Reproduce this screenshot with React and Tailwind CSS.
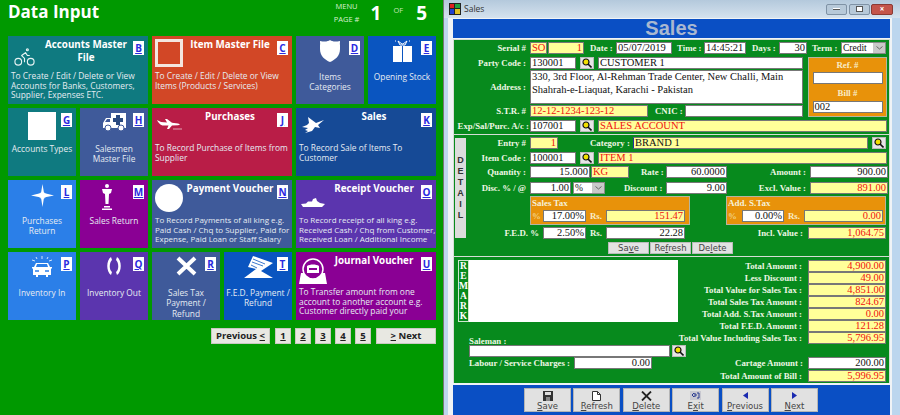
import React from 'react';
import { Bike } from 'lucide-react';

const SERIF = "[font-family:'Liberation_Serif',serif]";

const PlainSquare = () => <div className="w-[28px] h-[28px] border-[3px] border-[#f4e6df]" />;
const FilledSquare = () => <div className="w-[28px] h-[28px] bg-white" />;
const FilledCircle = () => <div className="w-[28px] h-[28px] rounded-full bg-white" />;

const Ambulance = () => (
  <svg width="25" height="20" viewBox="0 0 25 20">
    <path d="M9 1h15v15H1v-5l3-5h5z" fill="#fff" />
    <path d="M3 10l2-3h3v3z" fill="#3f5a9a" />
    <path d="M14 3h4v3h3v4h-3v3h-4v-3h-3V6h3z" fill="#2a4a80" />
    <circle cx="6" cy="16" r="3" fill="#fff" stroke="#3f5a9a" />
    <circle cx="19" cy="16" r="3" fill="#fff" stroke="#3f5a9a" />
  </svg>
);
const ShieldIcon = () => (
  <svg width="20" height="22" viewBox="0 0 20 22">
    <path d="M10 0c2 1.500 5 2 10 1 0 1 0 2-.2 3 .5 1.500.2 3 .2 5 0 7-5 11-10 13C5 20 0 16 0 9c0-2-.3-3.500.2-5C0 3 0 2 0 1c5 1 8 .5 10-1z" fill="#fff" />
  </svg>
);
const GiftBook = () => (
  <svg width="21" height="22" viewBox="0 0 21 22">
    <path d="M6 1l4 3 1 0 4-3-2 4H8zM3 1h1M17 1h1" stroke="#fff" strokeWidth="1" fill="none" />
    <path d="M1 6h9v16H1zM11 6h9v16h-9z" fill="#fff" />
  </svg>
);
const Plane = () => (
  <svg width="25" height="11" viewBox="0 0 25 11">
    <path d="M0 1l4 2 6 .5L8 0h2l5 3.800 6 .7c2 .5 3 1.200 0 1.800l-6 .3-3 3.400H10l1.500-3.400-6 0C3 6 1 3 0 1z" fill="#fff" />
    <path d="M16 10h9" stroke="#fff" strokeWidth=".6" />
  </svg>
);
const Helicopter = () => (
  <svg width="23" height="18" viewBox="0 0 23 18">
    <path d="M6 0l8 6 8-3-6 5 2 3-5-1-3 4-7 2 3-2-3-1 3-2-6-1 5-2 2-2z" fill="#fff" />
  </svg>
);
const Star = () => (
  <svg width="23" height="23" viewBox="0 0 23 23">
    <path d="M11.500 0l1.500 9 10 2.500-10 2L11.500 23 10 13.500 0 11.500 10 9z" fill="#fff" />
    <circle cx="11.500" cy="11.500" r="3" fill="none" stroke="#fff" />
  </svg>
);
const Statue = () => (
  <svg width="10" height="26" viewBox="0 0 10 26">
    <circle cx="5" cy="2" r="2" fill="#fff" />
    <path d="M0 5h10l-1 4-2 1-.5 10h-3L3 10 1 9z" fill="#fff" />
    <path d="M2 22h6v1.500H2zM0 24.500h10V26H0z" fill="#fff" />
  </svg>
);
const Ship = () => (
  <svg width="24" height="9" viewBox="0 0 24 9">
    <path d="M0 6l5-.500 2-2h4L12 1l3-1 1 3 3 2 5 1-3 3H2z" fill="#fff" />
  </svg>
);
const Car = () => (
  <svg width="20" height="21" viewBox="0 0 20 21">
    <path d="M10 0v3M4 1l1 2M16 1l-1 2M0 4l3 1M20 4l-3 1" stroke="#fff" strokeWidth=".8" />
    <path d="M4 7h12l2 4h2v1l-1 1v6h-3v2h-2v-2H6v2H4v-2H1v-6l-1-1v-1h2z" fill="#fff" />
    <path d="M5 8h10l1 3H4z" fill="#2b7fe8" />
    <path d="M3 15h4M13 15h4" stroke="#2b7fe8" strokeWidth="1.500" />
  </svg>
);
const Arcs = () => (
  <svg width="18" height="20" viewBox="0 0 18 20">
    <path d="M6 1C1 4 1 16 6 19l1-3C4 14 4 7 7 4z" fill="#fff" />
    <path d="M12 1c5 3 5 15 0 18l-1-3c3-2 3-9 0-12z" fill="#fff" />
  </svg>
);
const Cross = () => (
  <svg width="21" height="20" viewBox="0 0 21 20">
    <path d="M2 2l17 16M19 2L2 18" stroke="#fff" strokeWidth="4" />
  </svg>
);
const Envelope = () => (
  <svg width="29" height="22" viewBox="0 0 29 22">
    <path d="M9 0l20 7-12 8 12 7H0l4-9-4 9 12-9-8-2z" fill="#fff" />
    <path d="M9 3l12 5M8 6l11 4M7 9l6 3" stroke="#0a55c0" strokeWidth=".8" />
  </svg>
);
const Bag = () => (
  <svg width="28" height="26" viewBox="0 0 28 26">
    <path d="M2 15h24l2 11H0z" fill="#fff" />
    <circle cx="14" cy="11" r="10" fill="#8a0094" stroke="#fff" strokeWidth="1.500" />
    <path d="M8 8c3-2 9-2 12 0v7H8z" fill="#fff" />
    <path d="M10 10h8v2h-8z" fill="#8a0094" />
  </svg>
);

const tiles = [
  { key: 'B', wide: true, title: 'Accounts Master File', desc: 'To Create / Edit / Delete or View Accounts for Banks, Customers, Supplier, Expenses ETC.', bg: 'col-span-2 bg-[#0f7a80]', icon: <Bike size={23} strokeWidth={1.200} color="#e6f2f2" />, pos: 'pl-[5px] pt-[9px]' },
  { key: 'C', wide: true, title: 'Item Master File', desc: 'To Create / Edit / Delete or View Items (Products / Services)', bg: 'col-span-2 bg-[#d24726]', icon: <PlainSquare />, pos: 'pl-[3px] pt-[3px]' },
  { key: 'D', title: 'Items Categories', bg: 'bg-[#3f5a9a]', icon: <ShieldIcon /> },
  { key: 'E', title: 'Opening Stock', bg: 'bg-[#0a55c0]', icon: <GiftBook /> },
  { key: 'G', title: 'Accounts Types', bg: 'bg-[#0f7a80]', icon: <FilledSquare /> },
  { key: 'H', title: 'Salesmen Master File', bg: 'bg-[#3f5a9a]', icon: <Ambulance /> },
  { key: 'J', wide: true, title: 'Purchases', desc: 'To Record Purchase of Items from Supplier', bg: 'col-span-2 bg-[#b91d47]', icon: <Plane />, pos: 'pl-[5px] pt-[11px]' },
  { key: 'K', wide: true, title: 'Sales', desc: 'To Record Sale of Items To Customer', bg: 'col-span-2 bg-[#164a96]', icon: <Helicopter />, pos: 'pl-[6px] pt-[9px]' },
  { key: 'L', title: 'Purchases Return', bg: 'bg-[#2b7fe8]', icon: <Star /> },
  { key: 'M', title: 'Sales Return', bg: 'bg-[#8a0094]', icon: <div className="-ml-[14px]"><Statue /></div> },
  { key: 'N', wide: true, tight: true, title: 'Payment Voucher', desc: 'To Record Payments of all king e.g. Paid Cash / Chq to Supplier, Paid for Expense, Paid Loan or Staff Salary', bg: 'col-span-2 bg-[#3f5a9a]', icon: <FilledCircle />, pos: 'pl-[3px] pt-[4px]' },
  { key: 'O', wide: true, tight: true, title: 'Receipt Voucher', desc: 'To Record receipt of all king e.g. Received Cash / Chq from Customer, Received Loan / Additional Income', bg: 'col-span-2 bg-[#5b35ae]', icon: <Ship />, pos: 'pl-[5px] pt-[18px]' },
  { key: 'P', title: 'Inventory In', bg: 'bg-[#2b7fe8]', icon: <Car /> },
  { key: 'Q', title: 'Inventory Out', bg: 'bg-[#5b35ae]', icon: <Arcs /> },
  { key: 'R', title: 'Sales Tax Payment / Refund', bg: 'bg-[#3f5a9a]', icon: <Cross /> },
  { key: 'T', title: 'F.E.D. Payment / Refund', bg: 'bg-[#0a55c0]', icon: <Envelope /> },
  { key: 'U', wide: true, title: 'Journal Voucher', desc: 'To Transfer amount from one account to another account e.g. Customer directly paid your', bg: 'col-span-2 bg-[#8a0094]', icon: <Bag />, pos: 'pl-[3px] pt-[6px]' },
];

function Tile({ tile }) {
  return (
    <div className={`relative h-[68px] overflow-hidden text-[#e6ecf2] ${tile.bg}`}>
      <span className="absolute top-[5px] right-[4px] w-[11px] h-[14px] bg-white text-[#2a2ae0] text-[10px] font-bold underline leading-[14px] text-center">{tile.key}</span>
      {tile.wide ? (
        <>
          <div className="flex h-[35px]">
            <div className={`w-[36px] shrink-0 ${tile.pos}`}>{tile.icon}</div>
            <div className="flex-1 -ml-[4px] text-center text-white font-bold text-[9.800px] leading-[13px] pt-[2px] pr-[16px]">{tile.title}</div>
          </div>
          <p className={`pl-[3px] leading-[9.700px] ${tile.tight ? 'text-[8px]' : 'text-[8.400px]'}`}>{tile.desc}</p>
        </>
      ) : (
        <>
          <div className="flex h-[36px] justify-center items-start pt-[4px]">{tile.icon}</div>
          <p className="px-[2px] text-center text-[8.400px] leading-[10.400px]">{tile.title}</p>
        </>
      )}
    </div>
  );
}

function PageBtn({ children, className }) {
  return <button className={`h-[16px] bg-[#e8e8e2] border border-[#c9c9c0] text-[#222] font-bold text-[9.500px] leading-none ${className}`}>{children}</button>;
}

function DataInput() {
  return (
    <div className="w-[443px] h-[415px] shrink-0 bg-[#009900] font-['Open_Sans',sans-serif] flex flex-col">
      <div className="flex h-[36px] pl-[8px] pr-[16px] text-white">
        <h1 className="flex-1 text-[17px] font-bold leading-[23px]">Data Input</h1>
        <div className="flex items-start h-[30px]">
          <div className="text-center text-[#d9f0d0] text-[7.500px] leading-[13px] w-[26px] whitespace-nowrap">MENU<br />PAGE #</div>
          <span className="ml-[11px] text-[19px] font-bold leading-[26px]">1</span>
          <span className="ml-[12px] text-[#c5e8b8] text-[7.500px] leading-[21px]">OF</span>
          <span className="ml-[13px] text-[19px] font-bold leading-[26px]">5</span>
        </div>
      </div>
      <div className="grid grid-cols-[repeat(6,68px)] gap-[4px] pl-[8px]">
        {tiles.map((t) => <Tile key={t.key} tile={t} />)}
      </div>
      <div className="flex justify-end items-center gap-[4px] mt-[8px] pr-[7px]">
        <PageBtn className="w-[59px]">Previous <u>&lt;</u></PageBtn>
        <PageBtn className="w-[16px] ml-[1px] underline">1</PageBtn>
        <PageBtn className="w-[16px] underline">2</PageBtn>
        <PageBtn className="w-[16px] underline">3</PageBtn>
        <PageBtn className="w-[16px] underline">4</PageBtn>
        <PageBtn className="w-[16px] underline">5</PageBtn>
        <PageBtn className="w-[60px] ml-[1px]"><u>&gt;</u> Next</PageBtn>
      </div>
    </div>
  );
}

function Label({ children, className = '' }) {
  return <span className={`${SERIF} shrink-0 whitespace-nowrap font-bold text-[8.800px] leading-[12px] text-[#eef7e4] ${className}`}>{children}</span>;
}

function Field({ children, className = '', tone = 'white', right = false }) {
  const toneClass = tone === 'yellow' ? 'bg-[#ffff99] text-[#f01010]' : 'bg-white text-[#111]';
  return (
    <div className={`${SERIF} shrink-0 h-[12px] border border-[#777] px-[1px] text-[10.500px] leading-[10px] whitespace-nowrap overflow-hidden ${toneClass} ${right ? 'text-right' : ''} ${className}`}>
      {children}
    </div>
  );
}

function Lookup({ className = '' }) {
  return (
    <div className={`shrink-0 w-[14px] h-[12px] bg-[#e6e6e6] border border-[#bbb] flex items-center justify-center ${className}`}>
      <svg width="10" height="10" viewBox="0 0 10 10">
        <circle cx="4" cy="4" r="3" fill="#f2e000" stroke="#111" strokeWidth="1.200" />
        <path d="M6 6l3.500 3.500" stroke="#111" strokeWidth="1.600" />
      </svg>
    </div>
  );
}

function Combo({ value, className = '', arrow = 'w-[12px]' }) {
  return (
    <div className={`${SERIF} shrink-0 h-[12px] bg-white border border-[#888] flex text-[9.500px] leading-[10px] text-[#111] ${className}`}>
      <span className="flex-1 pl-[1px]">{value}</span>
      <span className={`${arrow} bg-[#c9c9c9] text-[#555] flex items-center justify-center`}>
        <svg width="7" height="4" viewBox="0 0 7 4"><path d="M.5.500l3 2.500 3-2.500" stroke="#666" fill="none" /></svg>
      </span>
    </div>
  );
}

function Row({ children, className = '' }) {
  return <div className={`flex items-center h-[12px] ${className}`}>{children}</div>;
}

function Section({ children, className = '' }) {
  return <section className={`bg-[#078a1d] border-x border-[#d5ddd5] ${className}`}>{children}</section>;
}

function TaxPanel({ title, className, inputClass, rsClass, pct, amount }) {
  return (
    <div className={`h-[29px] bg-[#e8920a] border border-[#b5b5a0] pl-[1px] ${className}`}>
      <div className={`${SERIF} h-[13px] font-bold text-[9px] leading-[13px] text-[#f5f0d8]`}>{title}</div>
      <Row>
        <Label className="w-[11px] text-[#f0d080]">%</Label>
        <Field right className={inputClass}>{pct}</Field>
        <Label className="w-[20px] pl-[4px] text-[#f8ecc8]">Rs.</Label>
        <Field right tone="yellow" className={rsClass}>{amount}</Field>
      </Row>
    </div>
  );
}

function SmallBtn({ children }) {
  return <button className="w-[41px] h-[12px] bg-[#e2e2e2] border border-[#bbb] font-['DejaVu_Sans',sans-serif] text-[8.500px] leading-[10px] text-[#444]">{children}</button>;
}

function ToolBtn({ icon, children }) {
  return (
    <button className="w-[47px] h-[24px] bg-[#e1e1e1] border border-[#b5b5b5] font-['DejaVu_Sans',sans-serif] text-[8.500px] leading-[10px] text-[#444] flex flex-col items-center justify-start pt-[1px]">
      <span className="h-[12px] flex items-center">{icon}</span>
      <span>{children}</span>
    </button>
  );
}

const totals = [
  ['Total Amount :', '4,900.00'],
  ['Less Discount :', '49.00'],
  ['Total Value for Sales Tax :', '4,851.00'],
  ['Total Sales Tax Amount :', '824.67'],
  ['Total Add. S.Tax  Amount :', '0.00'],
  ['Total F.E.D. Amount :', '121.28'],
  ['Total Value Including Sales Tax :', '5,796.95'],
];

function SalesForm() {
  return (
    <div className="flex-1 h-[415px] border-l border-[#777] bg-[#bcd6ee] flex flex-col">
      <div className="h-[18px] shrink-0 bg-gradient-to-b from-[#b4c9dc] to-[#d5e2ee] flex items-center pl-[5px] pr-[7px]">
        <svg width="12" height="12" viewBox="0 0 12 12" className="shrink-0">
          <rect width="12" height="12" fill="#222" />
          <rect x="1" y="1" width="4" height="4" fill="#e02020" />
          <rect x="6" y="1" width="5" height="4" fill="#20a040" />
          <rect x="1" y="6" width="4" height="5" fill="#2040d0" />
          <rect x="6" y="6" width="5" height="5" fill="#e0c020" />
        </svg>
        <span className="ml-[3px] flex-1 font-['Open_Sans',sans-serif] text-[8.500px] text-[#333]">Sales</span>
        <div className="flex gap-[1.500px]">
          <div className="w-[21px] h-[11px] rounded-[2px] bg-[#b7c9d9] border border-[#7f92a5] flex items-center justify-center"><div className="w-[7px] h-[2px] bg-white border-b border-[#555]" /></div>
          <div className="w-[21px] h-[11px] rounded-[2px] bg-[#b7c9d9] border border-[#7f92a5] flex items-center justify-center"><div className="w-[7px] h-[6px] border border-[#555] bg-white" /></div>
          <div className="w-[22px] h-[11px] rounded-[2px] bg-[#c4544a] border border-[#8a3a34] flex items-center justify-center text-white text-[8px] font-bold leading-none">×</div>
        </div>
      </div>
      <div className="flex-1 min-h-0 ml-[4px] pl-[5px] pr-[2px] mr-[8px] bg-[#f0f3f6] pt-[1px] flex flex-col w-[444px]">
        <div className="h-[19px] shrink-0 bg-[#0a4fc4] text-center font-['Liberation_Sans',sans-serif] font-bold text-[20px] leading-[19px] text-[#a9b8d0]">Sales</div>

        <Section className="mt-[1px] border-t border-b pt-[2px] pb-[2px]">
          <Row>
            <Label className="w-[72px] text-right">Serial #</Label>
            <Field tone="yellow" className="ml-[4px] w-[17px]">SO</Field>
            <Field tone="yellow" right className="ml-[1px] w-[36px]">1</Field>
            <Label className="ml-[6px] w-[26px]">Date :</Label>
            <Field className="w-[56px]">05/07/2019</Field>
            <Label className="ml-[5px] w-[27px]">Time :</Label>
            <Field className="w-[42px]">14:45:21</Field>
            <Label className="ml-[6px] w-[27px]">Days :</Label>
            <Field right className="w-[28px]">30</Field>
            <Label className="ml-[5px] w-[29px]">Term :</Label>
            <Combo value="Credit" className="w-[45px]" />
          </Row>
          <div className="flex mt-[3px] h-[60px]">
            <div className="w-[349px] shrink-0 flex flex-col">
              <Row>
                <Label className="w-[72px] text-right">Party Code :</Label>
                <Field className="ml-[4px] w-[46px]">130001</Field>
                <Lookup className="ml-[4px]" />
                <Field className="ml-[4px] w-[205px]">CUSTOMER 1</Field>
              </Row>
              <div className="flex items-center mt-[1px] h-[34px]">
                <Label className="w-[72px] text-right">Address :</Label>
                <div className={`${SERIF} ml-[4px] w-[273px] h-[34px] bg-white border border-[#777] px-[1px] text-[10.500px] leading-[12.500px] text-[#111]`}>330, 3rd Floor, Al-Rehman Trade Center, New Challi, Main Shahrah-e-Liaquat, Karachi - Pakistan</div>
              </div>
              <Row className="mt-[1px]">
                <Label className="w-[72px] text-right">S.T.R. #</Label>
                <Field tone="yellow" className="ml-[4px] w-[118px]">12-12-1234-123-12</Field>
                <Label className="ml-[7px] w-[30px]">CNIC :</Label>
                <Field className="w-[118px]">&nbsp;</Field>
              </Row>
            </div>
            <div className="ml-[5px] w-[79px] h-[60px] bg-[#e8920a] border border-[#b5b5a0] flex flex-col items-center">
              <Label className="text-[#f8ecc8] mt-[1px]">Ref. #</Label>
              <Field className="mt-[1px] w-[70px]">&nbsp;</Field>
              <Label className="mt-[3px] text-[#f8ecc8]">Bill #</Label>
              <Field className="mt-[2px] w-[70px]">002</Field>
            </div>
          </div>
          <Row className="mt-[3px]">
            <Label className="w-[75px] text-right">Exp/Sal/Purc. A/c :</Label>
            <Field className="ml-[1px] w-[46px]">107001</Field>
            <Lookup className="ml-[4px]" />
            <Field tone="yellow" className="ml-[4px] w-[289px]">SALES ACCOUNT</Field>
          </Row>
        </Section>

        <Section className="border-b pt-[2px] pb-[2px] flex">
          <div className="w-[12px] shrink-0 pl-[1px] pt-[1px]">
            <div className="w-[11px] h-[100px] bg-[#dcdcdc] flex flex-col items-center justify-center font-['Liberation_Sans',sans-serif] font-bold text-[9px] leading-[11px] text-[#333]">
              <span>D</span><span>E</span><span>T</span><span>A</span><span>I</span><span>L</span>
            </div>
          </div>
          <div className="flex-1 min-w-0">
            <Row>
              <Label className="w-[60px] text-right">Entry #</Label>
              <Field tone="yellow" right className="ml-[4px] w-[28px]">1</Field>
              <Label className="ml-[32px] w-[43px]">Category :</Label>
              <Field tone="yellow" className="w-[235px] border-l-[#223399]"><span className="text-[#111]">BRAND 1</span></Field>
              <Lookup className="ml-[4px]" />
            </Row>
            <Row className="mt-[3px]">
              <Label className="w-[60px] text-right">Item Code :</Label>
              <Field className="ml-[4px] w-[46px]">100001</Field>
              <Lookup className="ml-[4px]" />
              <Field tone="yellow" className="ml-[4px] w-[289px]">ITEM 1</Field>
            </Row>
            <Row className="mt-[2px]">
              <Label className="w-[60px] text-right">Quantity :</Label>
              <Field right className="ml-[4px] w-[60px]">15.000</Field>
              <Field tone="yellow" className="ml-[1px] w-[38px]">KG</Field>
              <Label className="ml-[12px] w-[25px]">Rate :</Label>
              <Field right className="w-[61px]">60.0000</Field>
              <Label className="ml-[2px] w-[77px] text-right">Amount :</Label>
              <Field right className="ml-[4px] w-[78px]">900.00</Field>
            </Row>
            <Row className="mt-[4px]">
              <Label className="w-[60px] text-right">Disc. % / @</Label>
              <Field right className="ml-[4px] w-[41px]">1.00</Field>
              <Combo value="%" className="ml-[2px] w-[32px]" />
              <Label className="ml-[19px] w-[42px]">Discount :</Label>
              <Field right className="w-[61px]">9.00</Field>
              <Label className="ml-[2px] w-[77px] text-right">Excl. Value :</Label>
              <Field right tone="yellow" className="ml-[4px] w-[78px]">891.00</Field>
            </Row>
            <div className="flex mt-[2px] pl-[64px]">
              <TaxPanel title="Sales Tax" className="w-[160px]" inputClass="w-[43px]" rsClass="w-[79px]" pct="17.00%" amount="151.47" />
              <TaxPanel title="Add. S.Tax" className="ml-[36px] w-[160px]" inputClass="w-[42px] ml-[3px]" rsClass="w-[79px]" pct="0.00%" amount="0.00" />
            </div>
            <Row className="mt-[2px]">
              <Label className="w-[73px] text-right">F.E.D. %</Label>
              <Field right className="ml-[4px] w-[43px]">2.50%</Field>
              <Label className="w-[20px] pl-[4px]">Rs.</Label>
              <Field right className="w-[79px]">22.28</Field>
              <Label className="ml-[2px] w-[116px] text-right">Incl. Value :</Label>
              <Field right tone="yellow" className="ml-[5px] w-[78px]">1,064.75</Field>
            </Row>
            <div className="flex mt-[3px] pl-[142px] gap-[1px]">
              <SmallBtn>Sa<u>v</u>e</SmallBtn>
              <SmallBtn>Re<u>f</u>resh</SmallBtn>
              <SmallBtn>De<u>l</u>ete</SmallBtn>
            </div>
          </div>
        </Section>

        <Section className="pt-[3px] pb-[1px] flex">
          <div className="w-[228px] shrink-0 pl-[4px]">
            <div className="flex h-[62px]">
              <div className={`${SERIF} w-[11px] border border-[#cfe8cf] flex flex-col items-center justify-between font-bold text-[9.500px] leading-[10px] text-white`}>
                <span>R</span><span>E</span><span>M</span><span>A</span><span>R</span><span>K</span>
              </div>
              <div className="w-[209px] bg-white" />
            </div>
            <div className="pl-[11px] mt-[13px]">
              <Label className="block h-[10px] leading-[10px]">Saleman :</Label>
              <Row>
                <Field className="w-[201px]">&nbsp;</Field>
                <Lookup className="ml-[2px]" />
              </Row>
              <Row>
                <Label className="w-[105px]">Labour / Service Charges :</Label>
                <Field right className="w-[78px]">0.00</Field>
              </Row>
            </div>
          </div>
          <div className="flex-1 min-w-0 pr-[3px] flex flex-col items-end">
            {totals.map(([label, val]) => (
              <Row key={label} className="justify-end">
                <Label className="text-right mr-[6px]">{label}</Label>
                <Field right tone="yellow" className="w-[78px] !h-[11.500px]">{val}</Field>
              </Row>
            ))}
            <Row className="justify-end mt-[13px]">
              <Label className="mr-[5px]">Cartage Amount :</Label>
              <Field right className="w-[78px]">200.00</Field>
            </Row>
            <Row className="justify-end mt-[1px]">
              <Label className="mr-[6px]">Total Amount of Bill :</Label>
              <Field right tone="yellow" className="w-[78px]">5,996.95</Field>
            </Row>
          </div>
        </Section>

        <div className="mt-[2px] flex-1 bg-[#0a4fc4] pl-[71px] pt-[3px] flex gap-[2.400px]">
          <ToolBtn icon={<svg width="10" height="10" viewBox="0 0 10 10"><path d="M0 0h10v10H0z" fill="#333" /><path d="M2 1h6v3H2z" fill="#ddd" /><path d="M3 6h4v4H3z" fill="#888" /></svg>}><u>S</u>ave</ToolBtn>
          <ToolBtn icon={<svg width="9" height="10" viewBox="0 0 9 10"><path d="M.5.500h5l3 3v6h-8z" fill="#fff" stroke="#333" /><path d="M5.500.500v3h3" fill="none" stroke="#333" /></svg>}><u>R</u>efresh</ToolBtn>
          <ToolBtn icon={<svg width="11" height="10" viewBox="0 0 11 10"><path d="M1 .5l9 9M10 .5l-9 9" stroke="#222" strokeWidth="1.800" /></svg>}><u>D</u>elete</ToolBtn>
          <ToolBtn icon={<svg width="11" height="9" viewBox="0 0 11 9"><path d="M0 0h11v9H0z" fill="#c8c8d0" /><path d="M2 4l2-2v1h2v2H4v1zM7 2h2v5H7" fill="none" stroke="#2a3a90" /></svg>}>E<u>x</u>it</ToolBtn>
          <ToolBtn icon={<svg width="5" height="7" viewBox="0 0 5 7"><path d="M5 0v7L0 3.500z" fill="#1a2ab0" /></svg>}><u>P</u>revious</ToolBtn>
          <ToolBtn icon={<svg width="5" height="7" viewBox="0 0 5 7"><path d="M0 0v7l5-3.500z" fill="#1a2ab0" /></svg>}><u>N</u>ext</ToolBtn>
        </div>
      </div>
    </div>
  );
}

export default function App() {
  return (
    <div className="w-[900px] h-[415px] flex overflow-hidden">
      <DataInput />
      <SalesForm />
    </div>
  );
}
